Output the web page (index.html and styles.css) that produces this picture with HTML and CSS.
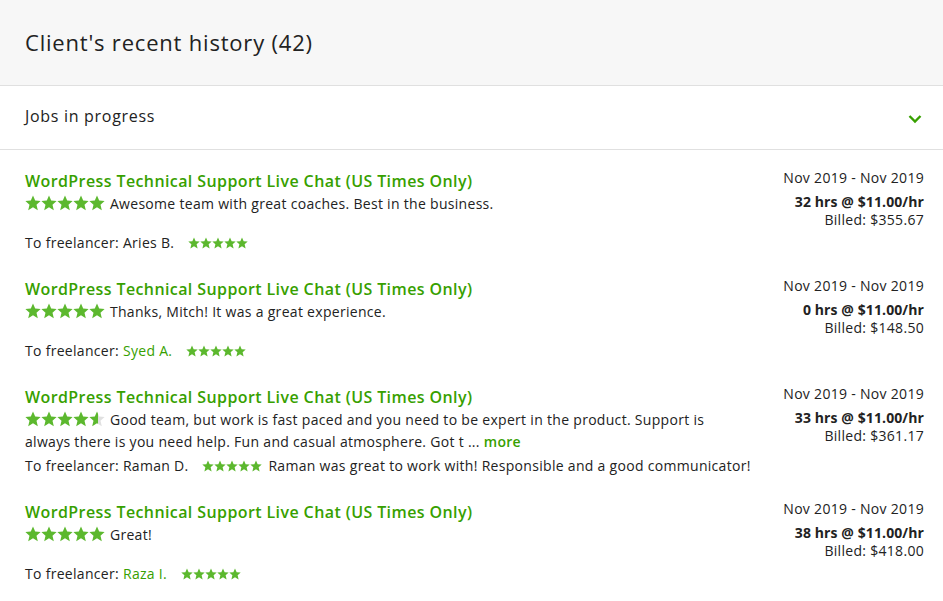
FILE: index.html
```html
<!DOCTYPE html>
<html>
<head>
<meta charset="utf-8">
<link rel="stylesheet" href="styles.css">
</head>
<body>
<svg width="0" height="0" class="defs">
  <defs>
    <symbol id="star" viewBox="0 0 16 16"><polygon points="8,0.6 10.2,5.6 15.6,6.1 11.5,9.7 12.8,15.2 8,12.3 3.2,15.2 4.5,9.7 0.4,6.1 5.8,5.6"/></symbol>
    <linearGradient id="half" x1="0" x2="1" y1="0" y2="0"><stop offset="0.55" stop-color="#5cb82e"/><stop offset="0.55" stop-color="#e0e0e0"/></linearGradient>
  </defs>
</svg>
<div class="panel">
  <header class="head"><h2>Client's recent history (42)</h2></header>
  <div class="section">
    <span>Jobs in progress</span>
    <svg class="chev" width="14" height="10" viewBox="0 0 14 10"><path d="M1.5 2 L7 7.5 L12.5 2" fill="none" stroke="#37a000" stroke-width="2.4"/></svg>
  </div>
  <div class="list">
    <div class="item">
      <div class="main">
        <a class="job">WordPress Technical Support Live Chat (US Times Only)</a>
        <p class="comment"><svg class="stars big" width="80" height="16" viewBox="0 0 80 16"><use href="#star" x="0" width="16" height="16"/><use href="#star" x="16" width="16" height="16"/><use href="#star" x="32" width="16" height="16"/><use href="#star" x="48" width="16" height="16"/><use href="#star" x="64" width="16" height="16"/></svg> Awesome team with great coaches. Best in the business.</p>
        <p class="to">To freelancer: Aries B. <svg class="stars small" width="60" height="12" viewBox="0 0 80 16"><use href="#star" x="0" width="16" height="16"/><use href="#star" x="16" width="16" height="16"/><use href="#star" x="32" width="16" height="16"/><use href="#star" x="48" width="16" height="16"/><use href="#star" x="64" width="16" height="16"/></svg></p>
      </div>
      <div class="side">
        <div class="date">Nov 2019 - Nov 2019</div>
        <div class="hrs">32 hrs @ $11.00/hr</div>
        <div class="billed">Billed: $355.67</div>
      </div>
    </div>
    <div class="item">
      <div class="main">
        <a class="job">WordPress Technical Support Live Chat (US Times Only)</a>
        <p class="comment"><svg class="stars big" width="80" height="16" viewBox="0 0 80 16"><use href="#star" x="0" width="16" height="16"/><use href="#star" x="16" width="16" height="16"/><use href="#star" x="32" width="16" height="16"/><use href="#star" x="48" width="16" height="16"/><use href="#star" x="64" width="16" height="16"/></svg> Thanks, Mitch! It was a great experience.</p>
        <p class="to">To freelancer: <a class="name">Syed A.</a> <svg class="stars small" width="60" height="12" viewBox="0 0 80 16"><use href="#star" x="0" width="16" height="16"/><use href="#star" x="16" width="16" height="16"/><use href="#star" x="32" width="16" height="16"/><use href="#star" x="48" width="16" height="16"/><use href="#star" x="64" width="16" height="16"/></svg></p>
      </div>
      <div class="side">
        <div class="date">Nov 2019 - Nov 2019</div>
        <div class="hrs">0 hrs @ $11.00/hr</div>
        <div class="billed">Billed: $148.50</div>
      </div>
    </div>
    <div class="item">
      <div class="main">
        <a class="job">WordPress Technical Support Live Chat (US Times Only)</a>
        <p class="comment"><svg class="stars big" width="80" height="16" viewBox="0 0 80 16"><use href="#star" x="0" width="16" height="16"/><use href="#star" x="16" width="16" height="16"/><use href="#star" x="32" width="16" height="16"/><use href="#star" x="48" width="16" height="16"/><use href="#star" x="64" width="16" height="16" fill="url(#half)"/></svg> Good team, but work is fast paced and you need to be expert in the product. Support is always there is you need help. Fun and casual atmosphere. Got t ... <a class="more">more</a></p>
        <p class="to">To freelancer: Raman D. <svg class="stars small" width="60" height="12" viewBox="0 0 80 16"><use href="#star" x="0" width="16" height="16"/><use href="#star" x="16" width="16" height="16"/><use href="#star" x="32" width="16" height="16"/><use href="#star" x="48" width="16" height="16"/><use href="#star" x="64" width="16" height="16"/></svg> Raman was great to work with! Responsible and a good communicator!</p>
      </div>
      <div class="side">
        <div class="date">Nov 2019 - Nov 2019</div>
        <div class="hrs">33 hrs @ $11.00/hr</div>
        <div class="billed">Billed: $361.17</div>
      </div>
    </div>
    <div class="item">
      <div class="main">
        <a class="job">WordPress Technical Support Live Chat (US Times Only)</a>
        <p class="comment"><svg class="stars big" width="80" height="16" viewBox="0 0 80 16"><use href="#star" x="0" width="16" height="16"/><use href="#star" x="16" width="16" height="16"/><use href="#star" x="32" width="16" height="16"/><use href="#star" x="48" width="16" height="16"/><use href="#star" x="64" width="16" height="16"/></svg> Great!</p>
        <p class="to">To freelancer: <a class="name">Raza I.</a> <svg class="stars small" width="60" height="12" viewBox="0 0 80 16"><use href="#star" x="0" width="16" height="16"/><use href="#star" x="16" width="16" height="16"/><use href="#star" x="32" width="16" height="16"/><use href="#star" x="48" width="16" height="16"/><use href="#star" x="64" width="16" height="16"/></svg></p>
      </div>
      <div class="side">
        <div class="date">Nov 2019 - Nov 2019</div>
        <div class="hrs">38 hrs @ $11.00/hr</div>
        <div class="billed">Billed: $418.00</div>
      </div>
    </div>
  </div>
</div>
</body>
</html>
```
FILE: styles.css
```css
* { box-sizing: border-box; }
html, body { margin: 0; padding: 0; background: #fff; }
body { font-family: "Open Sans", "DejaVu Sans", sans-serif; color: #222; }
.defs { position: absolute; width: 0; height: 0; }
.panel { width: 943px; }
.head { background: #f7f7f7; height: 86px; border-bottom: 1px solid #e0e0e0; display: flex; align-items: center; padding: 0 25px 2px; }
.head h2 { margin: 0; font-size: 22px; font-weight: 400; color: #222; letter-spacing: 0.8px; line-height: 28px; }
.section { height: 64px; border-bottom: 1px solid #e0e0e0; display: flex; align-items: center; justify-content: space-between; padding: 0 21px 4px 25px; font-size: 16px; letter-spacing: 0.7px; color: #222; }
.chev { margin-top: 6px; }
.list { padding: 21px 19px 0 25px; }
.item { display: flex; justify-content: space-between; margin-bottom: 26px; }
.main { flex: 1; }
.job { display: block; color: #37a000; font-size: 16px; font-weight: 600; letter-spacing: 0.4px; line-height: 20px; }
.comment { margin: 2px 0 0; font-size: 14px; letter-spacing: 0.3px; line-height: 22px; min-height: 37px; width: 712px; color: #222; }
.stars { fill: #5cb82e; vertical-align: -2px; margin-right: 1px; }
.stars.small { vertical-align: -1px; margin-left: 10px; margin-right: 2px; }
.to { margin: 3px 0 0; font-size: 14px; letter-spacing: 0.3px; line-height: 20px; color: #222; }
.name, .more { color: #37a000; }
.more { font-weight: 600; }
.side { text-align: right; font-size: 14px; letter-spacing: 0.3px; color: #222; margin-top: -3px; }
.date { line-height: 20px; }
.hrs { font-weight: 700; letter-spacing: 0.1px; line-height: 18px; margin-top: 5px; }
.billed { line-height: 17px; }
```
